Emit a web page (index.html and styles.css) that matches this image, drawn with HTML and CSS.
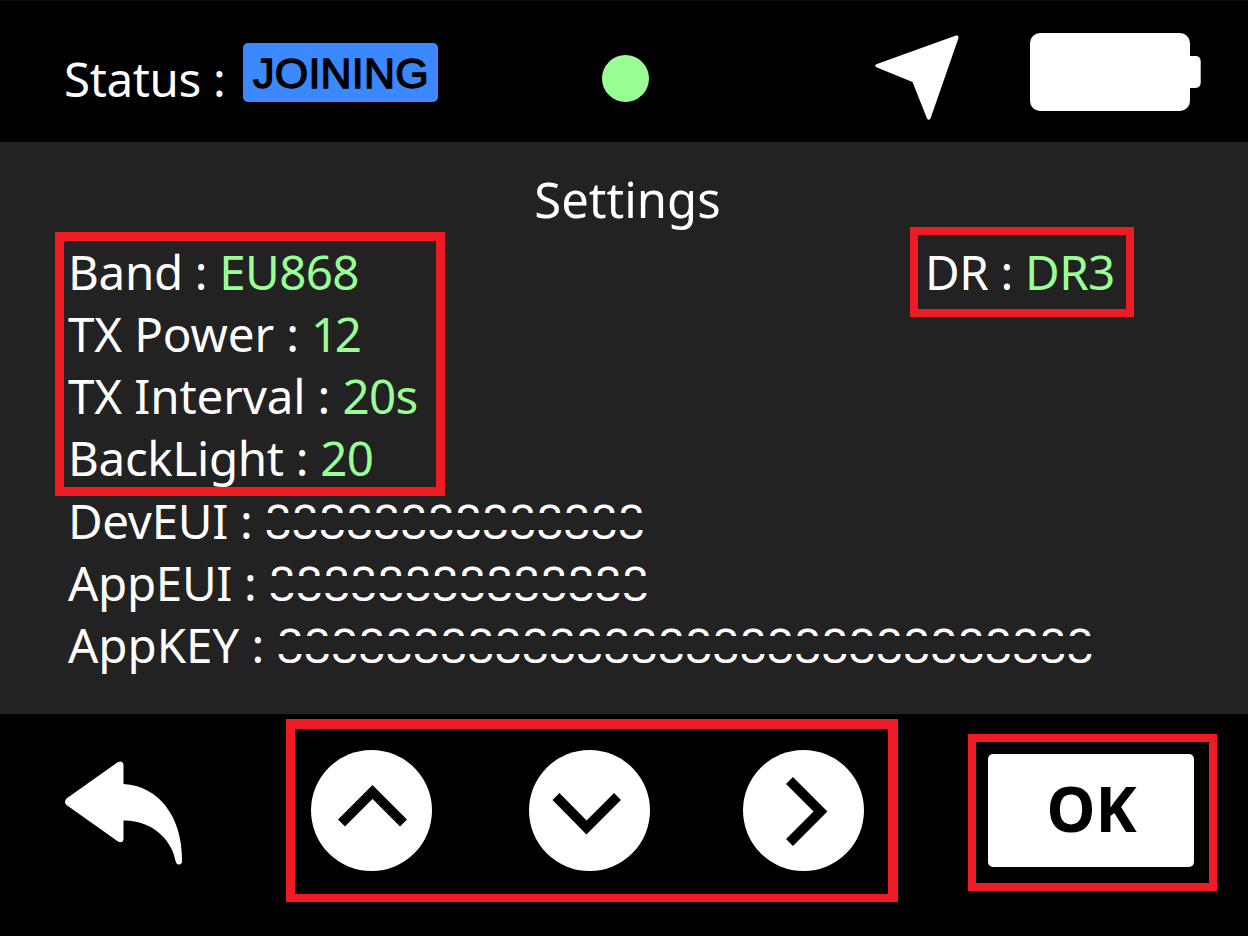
FILE: index.html
```html
<!DOCTYPE html>
<html lang="en">
<head>
<meta charset="utf-8">
<title>Settings</title>
<link rel="stylesheet" href="styles.css">
</head>
<body>
<div class="screen">
  <header class="status-bar">
    <span class="status-label">Status :</span>
    <span class="badge">JOINING</span>
    <span class="dot"></span>
    <svg class="nav-arrow" viewBox="0 0 84 86"><path d="M2 29L81 .5Q84 0 83.500 3L55.500 83.500Q54 86 52 83.500L37.500 47L2 32.500Q-1.500 30.500 2 29Z" fill="#fff"/></svg>
    <svg class="battery" viewBox="0 0 171 78"><rect width="160" height="78" rx="10"/><rect x="150" y="23" width="20.700" height="32" rx="5"/></svg>
  </header>
  <main class="settings">
    <h1 class="title">Settings</h1>
    <div class="columns">
      <div class="frame frame-values">
        <div class="rows">
          <div class="row">Band : <span class="value">EU868</span></div>
          <div class="row row-power">TX Power : <span class="value value-tight">12</span></div>
          <div class="row row-interval">TX Interval : <span class="value">20s</span></div>
          <div class="row">BackLight : <span class="value">20</span></div>
        </div>
      </div>
      <div class="frame frame-rate"><div class="row">DR : <span class="value">DR3</span></div></div>
    </div>
    <div class="keys">
      <div class="row">DevEUI : <span class="masked masked-dev">88888888888888</span></div>
      <div class="row">AppEUI : <span class="masked masked-app">88888888888888</span></div>
      <div class="row row-key">AppKEY : <span class="masked masked-key">888888888888888888888888888888</span></div>
    </div>
  </main>
  <footer class="controls">
    <svg class="back" viewBox="0 0 118 104"><path d="M1.500 37.500L53 1Q58 -1 58.500 4V23C94 25 117 56 117 98V100Q117 103.500 114 103.500Q111.500 103.500 110.500 100C107 79 87 59 58.500 59.500V78Q58 83 53 80.500L1.500 44Q-1.500 41 1.500 37.500Z" fill="#fff"/></svg>
    <div class="frame frame-nav">
      <svg class="round" viewBox="0 0 121 121"><circle cx="60.500" cy="60.500" r="60.500" fill="#fff"/><path d="M30.500 73L61.500 42L92.500 73"/></svg>
      <svg class="round" viewBox="0 0 121 121"><circle cx="60.500" cy="60.500" r="60.500" fill="#fff"/><path d="M27 46.500L57.500 77.500L88.500 46.500"/></svg>
      <svg class="round" viewBox="0 0 121 121"><circle cx="60.500" cy="60.500" r="60.500" fill="#fff"/><path d="M46.500 30.500L77.500 61.500L46.500 92.500"/></svg>
    </div>
    <div class="frame frame-ok"><button class="ok">OK</button></div>
  </footer>
</div>
</body>
</html>
```
FILE: styles.css
```css
* { box-sizing: border-box; }

body {
  margin: 0;
  background: #000;
  color: #fff;
  font: 47.5px "Noto Sans", sans-serif;
}

.screen {
  display: grid;
  grid-template-rows: 142px 572px 222px;
  width: 1248px;
  height: 936px;
  overflow: hidden;
  border-top: 1px solid #0c0c0c;
}

.status-bar {
  display: flex;
  align-items: flex-start;
  height: 142px;
  margin-top: -1px;
}

.status-label {
  width: 179px;
  margin: 46px 0 0 64px;
  letter-spacing: -0.35px;
  line-height: 65px;
  white-space: nowrap;
}

.badge {
  width: 195px;
  height: 59px;
  margin-top: 43px;
  padding-left: 1px;
  border-radius: 5px;
  background: #3b88ff;
  color: #000;
  font: 43px/61px "Liberation Sans", sans-serif;
  letter-spacing: 0.2px;
  -webkit-text-stroke: 1.4px #000;
  text-align: center;
}

.dot {
  width: 47px;
  height: 47px;
  margin: 55px 0 0 164px;
  border-radius: 50%;
  background: #99ff94;
}

.nav-arrow {
  width: 84px;
  height: 86px;
  margin: 35px 0 0 226px;
}

.battery {
  width: 171px;
  height: 78px;
  margin: 33px 0 0 71px;
  fill: #fff;
}

.settings {
  height: 572px;
  margin-top: -1px;
  background: #222;
}

.title {
  height: 85px;
  margin: 0;
  padding: 24px 0 0 7px;
  font-size: 49px;
  font-weight: 400;
  line-height: 67px;
  text-align: center;
}

.columns {
  display: flex;
  justify-content: space-between;
  align-items: flex-start;
  padding: 0 114px 0 55px;
}

.frame {
  flex: none;
  border: 8px solid #ed1c24;
}

.frame-values {
  width: 390px;
  height: 264px;
  margin-top: 5px;
  padding-left: 4px;
  border-width: 9px;
  overflow: hidden;
}

.rows { margin-top: -0.5px; }

.row {
  height: 62.2px;
  letter-spacing: -0.32px;
  line-height: 62.2px;
  white-space: nowrap;
}

.row-power,
.row-interval { letter-spacing: -0.12px; }

.value {
  color: #99ff94;
  letter-spacing: -0.6px;
}

.value-tight { letter-spacing: -3.5px; }

.frame-rate {
  width: 224px;
  height: 90px;
  padding: 6px 0 0 7px;
}

.keys {
  margin-top: -6px;
  padding-left: 68px;
}

.row-key { letter-spacing: -0.05px; }

.masked {
  position: relative;
  display: inline-block;
  letter-spacing: 0;
}

/* strip that hides the middle of the digits */
.masked::after {
  content: "";
  position: absolute;
  top: 23px;
  left: 0;
  width: 100%;
  height: 17px;
  background: #222;
}

.masked-app::after { top: 24px; }

.masked-key { letter-spacing: 0.07px; }

.masked-key::after {
  top: 22px;
  height: 18px;
}

.controls {
  display: flex;
  align-items: flex-start;
  margin-top: -1px;
}

.back {
  flex: none;
  width: 118px;
  height: 104px;
  margin: 47px 0 0 65px;
}

.frame-nav {
  display: flex;
  width: 612px;
  height: 183px;
  margin: 5px 0 0 103px;
  padding: 21px 0 0 16px;
  border-width: 10px 10px 8px 9px;
}

.round {
  flex: none;
  width: 121px;
  height: 121px;
  margin-right: 97px;
}

.round + .round { margin-right: 93px; }

.round path {
  fill: none;
  stroke: #000;
  stroke-width: 9.8;
}

.frame-ok {
  width: 249px;
  height: 157px;
  margin: 20px 0 0 70px;
  padding: 12px 0 0 12px;
}

.ok {
  display: block;
  width: 206px;
  height: 113px;
  padding: 0 0 5px 1px;
  border: 0;
  border-radius: 5px;
  background: #fff;
  color: #000;
  font: bold 62px/80px "Noto Sans", sans-serif;
}
```
